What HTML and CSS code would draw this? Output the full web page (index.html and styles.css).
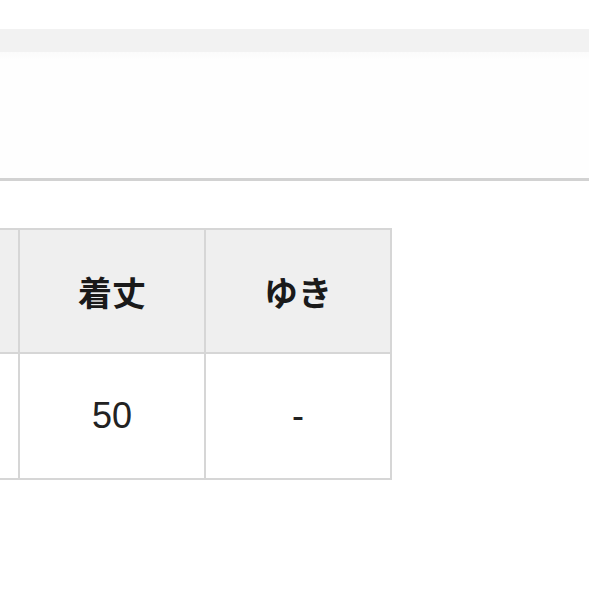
FILE: index.html
```html
<!DOCTYPE html>
<html lang="ja">
<head>
<meta charset="utf-8">
<link rel="stylesheet" href="styles.css">
</head>
<body>
<div class="page">
  <div class="topband"></div>
  <div class="blank"></div>
  <div class="rule"></div>
  <table class="size-table">
    <thead>
      <tr><th></th><th>着丈</th><th>ゆき</th></tr>
    </thead>
    <tbody>
      <tr><td></td><td>50</td><td>-</td></tr>
    </tbody>
  </table>
</div>
</body>
</html>
```
FILE: styles.css
```css
html, body {
  margin: 0;
  padding: 0;
  background: #ffffff;
}
.page {
  width: 589px;
  height: 589px;
  overflow: hidden;
  padding-top: 29px;
  box-sizing: border-box;
  font-family: "Liberation Sans", "Noto Sans CJK JP", sans-serif;
  color: #1a1a1a;
}
.topband {
  height: 23px;
  background: #f2f2f2;
}
.blank {
  height: 126px;
  background: linear-gradient(#fbfbfb 0, #fefefe 8px, #fefefe 100%);
}
.rule {
  height: 3px;
  background: #d2d2d2;
}
.size-table {
  margin-top: 47px;
  margin-left: -168px;
  border-collapse: collapse;
  table-layout: fixed;
}
.size-table th,
.size-table td {
  width: 184px;
  border: 2px solid #d6d6d6;
  text-align: center;
  padding: 0;
}
.size-table th {
  height: 122px;
  background: #efefef;
  font-family: "Noto Sans CJK JP", sans-serif;
  font-weight: 700;
  font-size: 34px;
  color: #1a1a1a;
}
.size-table td {
  height: 124px;
  background: #ffffff;
  font-size: 36px;
  font-weight: 400;
  color: #222222;
}
```
